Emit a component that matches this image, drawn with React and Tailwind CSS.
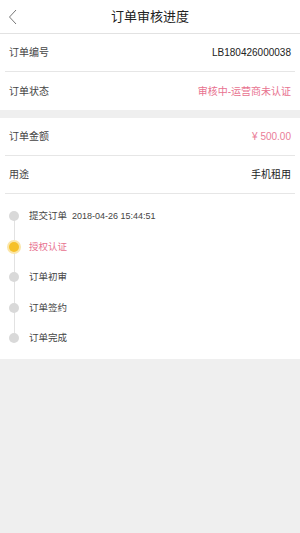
import React from "react";

const steps = [
    { label: "提交订单", time: "2018-04-26 15:44:51", state: "done" },
    { label: "授权认证", state: "active" },
    { label: "订单初审", state: "todo" },
    { label: "订单签约", state: "todo" },
    { label: "订单完成", state: "todo" },
];

function Row({ label, value, valueClass, divider }) {
    return (
        <div className="px-[5px]">
            <div className={`h-[38px] flex items-center justify-between px-[4px] ${divider ? "border-b border-[#e6e6e6]" : ""}`}>
                <span className="text-[10px] text-[#444]">{label}</span>
                <span className={`text-[10px] ${valueClass}`}>{value}</span>
            </div>
        </div>
    );
}

export default function App() {
    return (
        <div
            className="w-[300px] h-[533px] bg-[#efefef] flex flex-col"
            style={{ fontFamily: '"Liberation Sans", "Noto Sans CJK SC", sans-serif' }}
        >
            <div className="h-[34px] bg-white border-b border-[#e2e2e2] flex items-center relative">
                <svg className="absolute left-[8px] top-[9px]" width="9" height="16" viewBox="0 0 9 16">
                    <path d="M8 1 L1.5 8 L8 15" fill="none" stroke="#777" strokeWidth="1" />
                </svg>
                <span className="flex-1 text-center text-[13px] text-[#222]">订单审核进度</span>
            </div>

            <div className="bg-white">
                <Row label="订单编号" value="LB180426000038" valueClass="text-[#222] text-[10.6px]" divider />
                <Row label="订单状态" value="审核中-运营商未认证" valueClass="text-[#e8728f]" />
            </div>

            <div className="h-[8px]" />

            <div className="bg-white">
                <Row label="订单金额" value="¥ 500.00" valueClass="text-[#ea7d97]" divider />
                <Row label="用途" value="手机租用" valueClass="text-[#222]" divider />

                <div className="relative pt-[7px] pb-[5px] pl-[9px]">
                    <div className="absolute left-[14px] top-[22px] h-[122px] w-px bg-[#e2e2e2]" />
                    {steps.map((s) => (
                        <div key={s.label} className="h-[30.5px] flex items-center relative">
                            <span
                                className={`w-[10px] h-[10px] rounded-full ${
                                    s.state === "active"
                                        ? "bg-[#f6c12a] ring-2 ring-[#fbe6a8]"
                                        : "bg-[#d9d9d9]"
                                }`}
                            />
                            <span
                                className={`ml-[10px] text-[9.5px] ${
                                    s.state === "active" ? "text-[#e8728f]" : "text-[#444]"
                                }`}
                            >
                                {s.label}
                            </span>
                            {s.time && <span className="ml-[5px] text-[9px] text-[#444]">{s.time}</span>}
                        </div>
                    ))}
                </div>
            </div>
        </div>
    );
}
